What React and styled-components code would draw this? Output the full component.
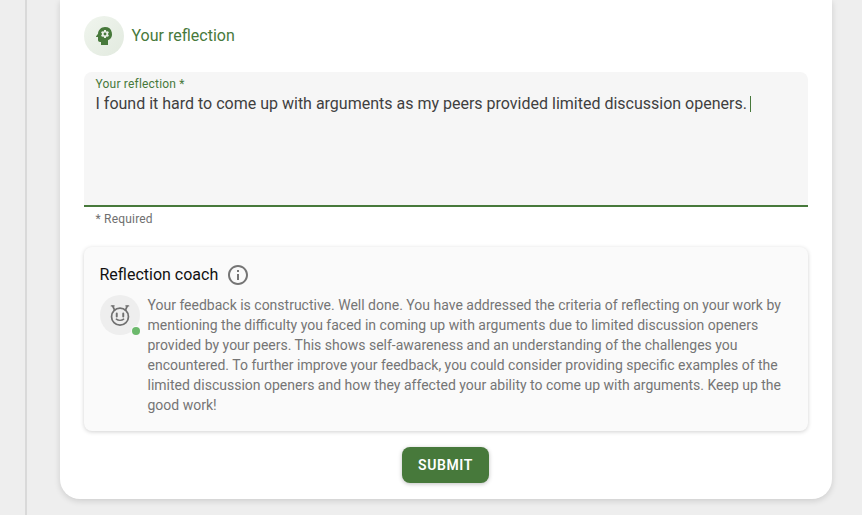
import styled, { createGlobalStyle } from "styled-components";
import { MdPsychology, MdInfoOutline } from "react-icons/md";

const GREEN = "#47793b";

export default function App() {
  return (
    <>
      <GlobalStyle />
      <Page>
        <Rail />
        <Card>
          <SectionHead>
            <HeadBadge>
              <MdPsychology size={24} />
            </HeadBadge>
            <SectionTitle>Your reflection</SectionTitle>
          </SectionHead>
          <Field>
            <FieldLabel>Your reflection *</FieldLabel>
            <FieldValue>
              I found it hard to come up with arguments as my peers provided
              limited discussion openers.
              <Caret />
            </FieldValue>
          </Field>
          <Helper>* Required</Helper>
          <Coach>
            <CoachHead>
              <CoachTitle>Reflection coach</CoachTitle>
              <MdInfoOutline size={24} color="#757575" />
            </CoachHead>
            <CoachBody>
              <Avatar>
                <RobotFace />
                <OnlineDot />
              </Avatar>
              <CoachText>
                Your feedback is constructive. Well done. You have addressed the
                criteria of reflecting on your work by mentioning the difficulty
                you faced in coming up with arguments due to limited discussion
                openers provided by your peers. This shows self-awareness and an
                understanding of the challenges you encountered. To further
                improve your feedback, you could consider providing specific
                examples of the limited discussion openers and how they affected
                your ability to come up with arguments. Keep up the good work!
              </CoachText>
            </CoachBody>
          </Coach>
          <Actions>
            <SubmitButton type="button">Submit</SubmitButton>
          </Actions>
        </Card>
      </Page>
    </>
  );
}

function RobotFace() {
  return (
    <svg width="26" height="26" viewBox="0 0 24 24" fill="none" stroke="#707070" strokeWidth="1.6" strokeLinecap="round">
      <circle cx="12" cy="13.5" r="7.8" />
      <path d="M7 7.4 5.4 4M17 7.4 18.6 4" />
      <path d="M4 3.6h2.6M17.4 3.6H20" strokeWidth="1.2" />
      <path d="M9 10.6v2.8M15 10.6v2.8" strokeWidth="1.8" />
      <path d="M8.6 15.8c1.8 1.6 5 1.6 6.8 0" strokeWidth="1.3" />
    </svg>
  );
}

const GlobalStyle = createGlobalStyle`
  html, body {
    margin: 0;
    padding: 0;
    background: #eeeeee;
    font-family: "Roboto", "Liberation Sans", sans-serif;
  }
`;

const Page = styled.div`
  display: flex;
  width: 862px;
  height: 515px;
  overflow: hidden;
  background: #eeeeee;
`;

const Rail = styled.div`
  width: 25px;
  height: 100%;
  border-right: 2px solid #d9d9d9;
`;

const Card = styled.main`
  box-sizing: border-box;
  width: 772px;
  height: 499px;
  margin-left: 33px;
  padding: 16px 24px 0;
  background: #ffffff;
  border-radius: 0 0 20px 20px;
  box-shadow: 0 2px 6px rgba(0, 0, 0, 0.14);
`;

const SectionHead = styled.div`
  display: flex;
  align-items: center;
  gap: 7.5px;
  height: 40px;
`;

const HeadBadge = styled.div`
  display: flex;
  align-items: center;
  justify-content: center;
  width: 40px;
  height: 40px;
  border-radius: 50%;
  color: ${GREEN};
  background: linear-gradient(135deg, #f0f5ee, #e2eadf);
`;

const SectionTitle = styled.span`
  font-size: 16px;
  line-height: 24px;
  color: ${GREEN};
`;

const Field = styled.div`
  box-sizing: border-box;
  height: 135px;
  margin-top: 16px;
  padding: 6px 11.5px 0;
  background: #f6f6f6;
  border-bottom: 2px solid ${GREEN};
  border-radius: 8px 8px 0 0;
`;

const FieldLabel = styled.div`
  font-size: 12px;
  line-height: 12px;
  letter-spacing: 0.2px;
  color: ${GREEN};
`;

const FieldValue = styled.div`
  margin-top: 2px;
  font-size: 16px;
  line-height: 24px;
  color: #3f3f3f;
`;

const Caret = styled.span`
  display: inline-block;
  width: 1px;
  height: 16px;
  margin-left: 3px;
  vertical-align: -3px;
  background: ${GREEN};
`;

const Helper = styled.div`
  margin: 5px 0 0 11.5px;
  font-size: 12px;
  line-height: 14px;
  letter-spacing: 0.2px;
  color: #6f6f6f;
`;

const Coach = styled.section`
  box-sizing: border-box;
  height: 184px;
  margin-top: 21px;
  padding: 16px 15.5px;
  background: #fafafa;
  border-radius: 8px;
  box-shadow: 0 1px 4px rgba(0, 0, 0, 0.18);
`;

const CoachHead = styled.div`
  display: flex;
  align-items: center;
  gap: 8px;
  height: 24px;
`;

const CoachTitle = styled.h2`
  margin: 0;
  font-size: 16px;
  font-weight: 400;
  line-height: 24px;
  color: #111111;
`;

const CoachBody = styled.div`
  display: flex;
  gap: 8px;
  margin-top: 8px;
`;

const Avatar = styled.div`
  position: relative;
  flex: none;
  display: flex;
  align-items: center;
  justify-content: center;
  width: 40px;
  height: 40px;
  border-radius: 50%;
  background: #eeeeee;
`;

const OnlineDot = styled.span`
  position: absolute;
  right: 0;
  bottom: 0;
  width: 8px;
  height: 8px;
  border-radius: 50%;
  background: #6cb96c;
  box-shadow: 0 0 0 1px #fafafa;
`;

const CoachText = styled.p`
  margin: 0;
  font-size: 14px;
  line-height: 20px;
  color: #757575;
`;

const Actions = styled.div`
  display: flex;
  justify-content: center;
  margin-top: 16px;
  padding-right: 1px;
`;

const SubmitButton = styled.button`
  width: 87px;
  height: 36px;
  padding: 0;
  border: none;
  border-radius: 8px;
  background: ${GREEN};
  color: #ffffff;
  font-family: inherit;
  font-size: 14px;
  font-weight: 600;
  letter-spacing: 0.6px;
  text-transform: uppercase;
  box-shadow: 0 1px 4px rgba(0, 0, 0, 0.25);
`;
